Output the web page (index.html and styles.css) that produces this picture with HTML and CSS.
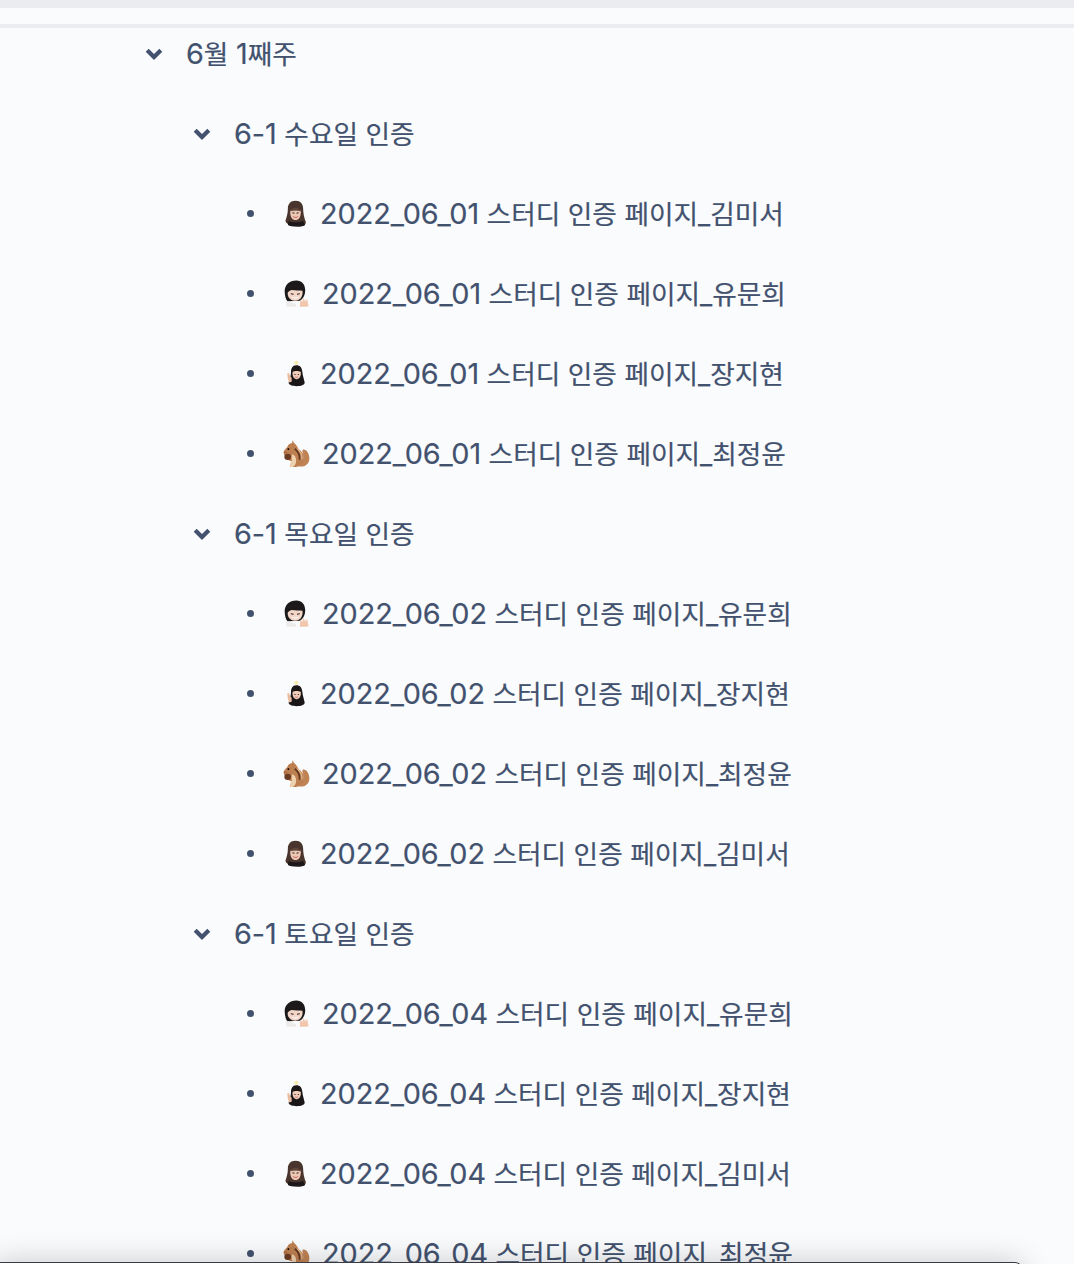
FILE: index.html
```html
<!DOCTYPE html>
<html lang="en">
<head>
    <meta charset="UTF-8">
    <meta name="viewport" content="width=device-width, initial-scale=1.0">
    <title>스터디 인증</title>
    <link rel="stylesheet" href="styles.css">
</head>
<body>
    <svg class="defs" width="0" height="0" aria-hidden="true">
        <symbol id="chevron" viewBox="0 0 18 12">
            <path d="M2.200 2.300 9 9l6.800-6.700" fill="none" stroke="currentColor" stroke-width="4.200"/>
        </symbol>
        <symbol id="kim" viewBox="0 0 60 78">
            <path d="M30 2C15 2 8 12 8 24c0 14-3 24-7 36 2 10 14 14 30 16 16 2 28-2 29-12-5-12-8-26-8-40C52 12 45 2 30 2z" fill="#4a352e"/>
            <path d="M15 30c8-1 22-1 30 0 2 14-4 28-15 28S13 44 15 30z" fill="#edc8b4"/>
            <path d="M15 33c1-14 29-14 30 0-8-4-22-4-30 0z" fill="#5f453a"/>
            <path d="M21 37l6 1M33 38l6-1" stroke="#2d2220" stroke-width="3"/>
            <path d="M22 46c5 4 11 4 16 0-1 7-14 7-16 0z" fill="#b5504f"/>
            <path d="M10 60c6 5 34 7 41 0l7 12c-8 6-40 6-50 0z" fill="#1c1718"/>
        </symbol>
        <symbol id="yoo" viewBox="0 0 76 78">
            <path d="M36 1C16 1 1 14 2 34c.5 12 3 22 8 28l38-2c9-8 14-18 14-30C62 12 52 1 36 1z" fill="#1b191a"/>
            <path d="M11 36c4-4 8-7 12-7 10 2 21 0 31 2 2 13-4 29-22 29C17 60 9 47 11 36z" fill="#f3d6c7"/>
            <path d="M20 40l8 1M38 41l8-1" stroke="#26201f" stroke-width="3"/>
            <path d="M22 47c6 5 15 5 22 0-1 8-19 9-22 0z" fill="#fff"/>
            <path d="M4 60c10 3 22 5 30 10l2 8H8z" fill="#ecebe9"/>
            <path d="M46 78l2-22 5 8 4-12 5 10 6-6 2 12 2 8-6 2z" fill="#f0c6ad"/>
        </symbol>
        <symbol id="jang" viewBox="0 0 54 78">
            <circle cx="28" cy="7" r="6" fill="#f5e8ad"/>
            <path d="M28 14C16 14 12 24 12 36c0 12-5 20-7 30 0 8 12 11 24 11s24-3 24-11c-2-10-6-20-7-32C45 22 40 14 28 14z" fill="#1b1718"/>
            <path d="M17 34c6-3 18-3 24 0 2 12-3 22-12 22S15 46 17 34z" fill="#efcdba"/>
            <path d="M22 42l4 0M32 42l4 0" stroke="#26201f" stroke-width="2.500"/>
            <path d="M24 48c3 2 7 2 10 0-1 4-9 4-10 0z" fill="#b5504f"/>
            <path d="M1 38l5 0 4 10 4 4v12l-8 2-4-14z" fill="#e8bc9f"/>
        </symbol>
        <symbol id="squirrel" viewBox="0 0 78 80">
            <path d="M44 78c18 4 32-6 33-22 1-14-7-28-17-28-5 0-4 6-2 14 3 12 2 24-14 36z" fill="#c08355"/>
            <path d="M27 1l5 8c7 5 10 12 13 18 12 8 18 22 14 36-3 11-13 17-25 17H22c-3-5-1-12 4-17-10 0-17-8-18-14C3 46 0 40 1 34c2-6 8-8 11-14 2-7 8-10 14-11z" fill="#bd7f50"/>
            <path d="M34 26c8 6 15 18 14 32" fill="none" stroke="#5d3520" stroke-width="5"/>
            <path d="M41 26c8 6 15 18 14 32" fill="none" stroke="#e3bd97" stroke-width="3"/>
            <path d="M26 42c8 2 12 10 12 20 0 8-4 14-10 18h-6c-3-5-1-12 4-17-2-7-2-14 0-21z" fill="#eed2b0"/>
            <circle cx="15" cy="27" r="3" fill="#24160f"/>
            <path d="M2 36c3 2 6 2 9 0" fill="none" stroke="#7d4b2c" stroke-width="2"/>
            <ellipse cx="13" cy="50" rx="10" ry="9" fill="#6a3c23"/>
        </symbol>
    </svg>

    <div class="top-band"></div>

    <main class="page">
        <div class="toggle week">
            <svg class="chevron"><use href="#chevron"/></svg>
            <span><span class="num">6</span>월 <span class="num">1</span>째주</span>
        </div>

        <section>
            <div class="toggle day">
                <svg class="chevron"><use href="#chevron"/></svg>
                <span><span class="num">6-1</span> 수요일 인증</span>
            </div>
            <ul class="links">
                <li><svg class="pic pic-kim"><use href="#kim"/></svg><span><span class="num">2022_06_01</span> 스터디 인증 페이지_김미서</span></li>
                <li><svg class="pic pic-yoo"><use href="#yoo"/></svg><span><span class="num">2022_06_01</span> 스터디 인증 페이지_유문희</span></li>
                <li><svg class="pic pic-jang"><use href="#jang"/></svg><span><span class="num">2022_06_01</span> 스터디 인증 페이지_장지현</span></li>
                <li><svg class="pic pic-squirrel"><use href="#squirrel"/></svg><span><span class="num">2022_06_01</span> 스터디 인증 페이지_최정윤</span></li>
            </ul>
        </section>

        <section>
            <div class="toggle day">
                <svg class="chevron"><use href="#chevron"/></svg>
                <span><span class="num">6-1</span> 목요일 인증</span>
            </div>
            <ul class="links">
                <li><svg class="pic pic-yoo"><use href="#yoo"/></svg><span><span class="num">2022_06_02</span> 스터디 인증 페이지_유문희</span></li>
                <li><svg class="pic pic-jang"><use href="#jang"/></svg><span><span class="num">2022_06_02</span> 스터디 인증 페이지_장지현</span></li>
                <li><svg class="pic pic-squirrel"><use href="#squirrel"/></svg><span><span class="num">2022_06_02</span> 스터디 인증 페이지_최정윤</span></li>
                <li><svg class="pic pic-kim"><use href="#kim"/></svg><span><span class="num">2022_06_02</span> 스터디 인증 페이지_김미서</span></li>
            </ul>
        </section>

        <section>
            <div class="toggle day">
                <svg class="chevron"><use href="#chevron"/></svg>
                <span><span class="num">6-1</span> 토요일 인증</span>
            </div>
            <ul class="links">
                <li><svg class="pic pic-yoo"><use href="#yoo"/></svg><span><span class="num">2022_06_04</span> 스터디 인증 페이지_유문희</span></li>
                <li><svg class="pic pic-jang"><use href="#jang"/></svg><span><span class="num">2022_06_04</span> 스터디 인증 페이지_장지현</span></li>
                <li><svg class="pic pic-kim"><use href="#kim"/></svg><span><span class="num">2022_06_04</span> 스터디 인증 페이지_김미서</span></li>
                <li><svg class="pic pic-squirrel"><use href="#squirrel"/></svg><span><span class="num">2022_06_04</span> 스터디 인증 페이지_최정윤</span></li>
            </ul>
        </section>
    </main>

    <!-- window edge that sits over the list -->
    <div class="bottom-sheet"></div>
</body>
</html>
```

FILE: styles.css
```css
html, body {
    margin: 0;
    height: 100%;
    overflow: hidden;
    background-color: #fafbfd;
}

body {
    font-family: Inter, "Noto Sans CJK KR", sans-serif;
    font-size: 26.7px;
    color: #42526e;
    -webkit-text-stroke: 0.2px #42526e;
}

.defs {
    position: absolute;
}

.top-band {
    height: 16px;
    border-top: 8px solid #ebecf0;
    border-bottom: 4px solid #ebecf0;
}

.num {
    font-size: 28.8px;
}

.toggle {
    display: flex;
    align-items: center;
    height: 80px;
}

/* text sits a little above the icons */
.toggle > span,
.links li > span {
    margin-bottom: 4px;
}

.page {
    margin-top: -14px;
}

.week {
    padding-left: 145px;
}

.day {
    padding-left: 193px;
}

.chevron {
    width: 18px;
    height: 12px;
    margin-right: 23px;
}

.links {
    list-style: none;
    margin: 0;
    padding: 0 0 0 246px;
}

.links li {
    display: flex;
    align-items: center;
    height: 80px;
}

.links li::before {
    content: "";
    width: 7px;
    height: 7px;
    margin-left: 1px;
    margin-bottom: 1px;
    border-radius: 50%;
    background-color: #42526e;
}

.pic {
    height: 27px;
    margin-bottom: 1px;
}

.pic-kim {
    width: 21px;
    margin-left: 31px;
    margin-right: 14px;
}

.pic-yoo {
    width: 26px;
    margin-left: 30px;
    margin-right: 12px;
}

.pic-jang {
    width: 18px;
    margin-left: 33px;
    margin-right: 15px;
}

.pic-squirrel {
    width: 27px;
    margin-left: 29px;
    margin-right: 12px;
}

.bottom-sheet {
    position: absolute;
    left: -8px;
    bottom: -38px;
    width: 1031px;
    height: 40px;
    box-sizing: border-box;
    border: 1px solid #3a3946;
    border-radius: 8px;
    background-color: #ffffff;
    box-shadow: 0 0 30px rgba(0, 0, 0, 0.2);
}
```
